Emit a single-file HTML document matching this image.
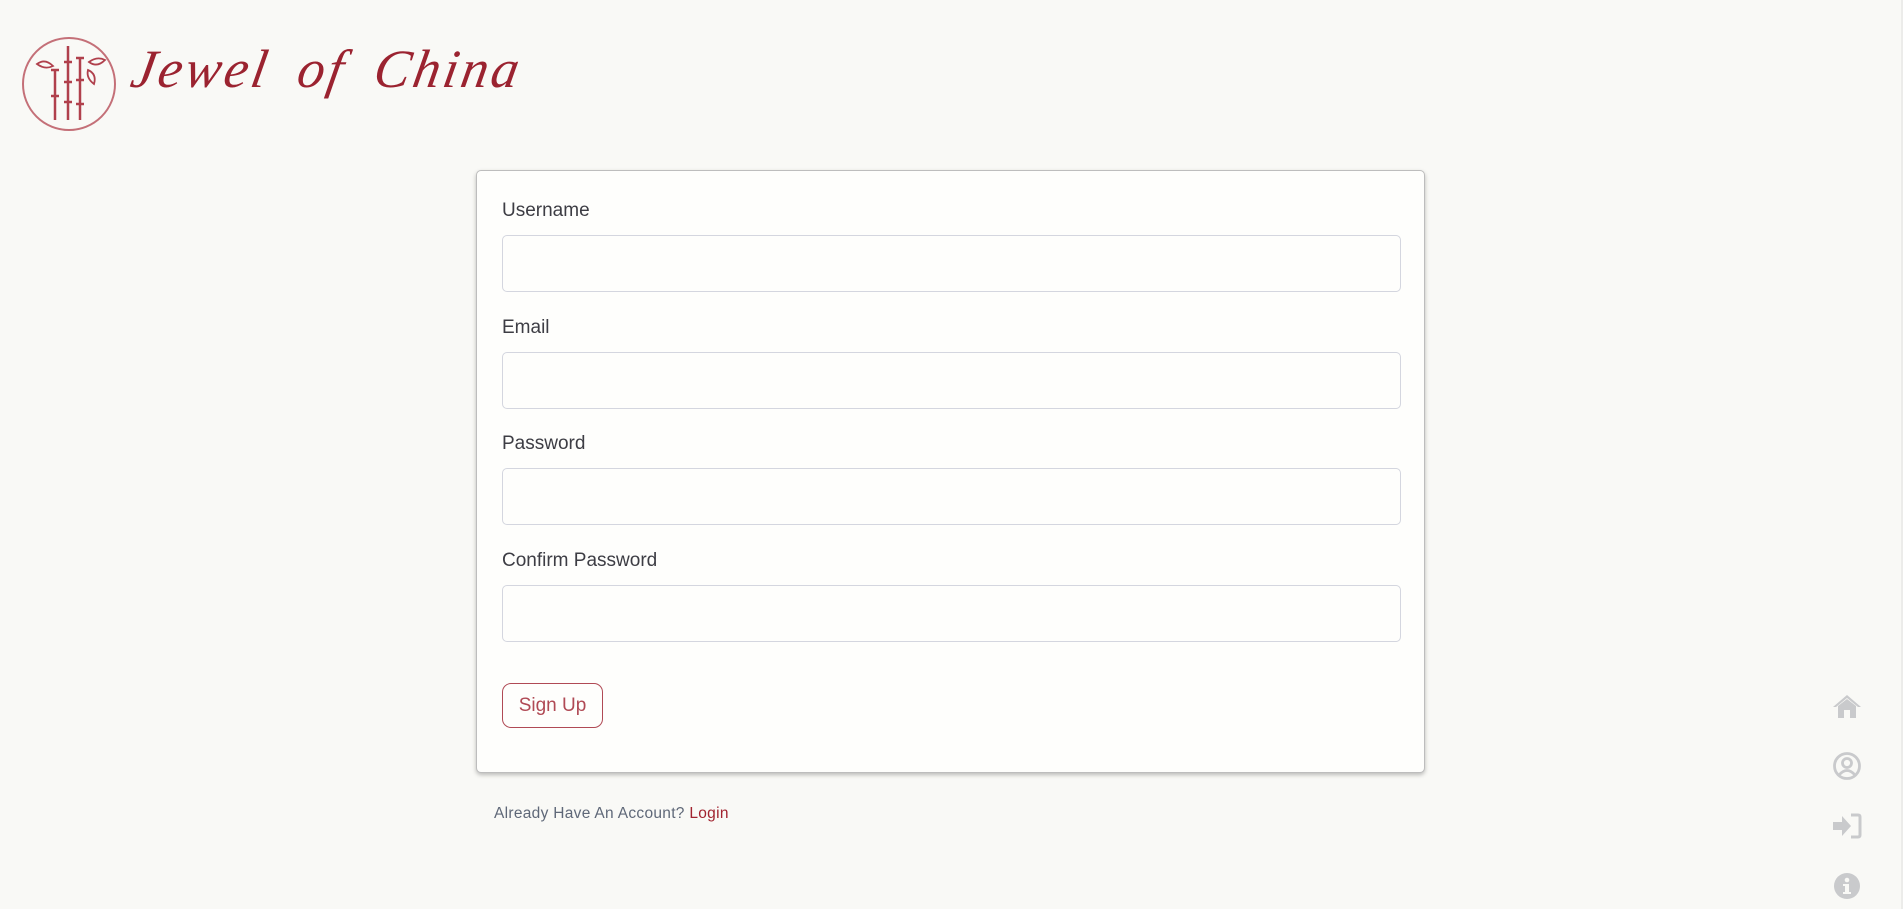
<!DOCTYPE html>
<html><head><meta charset="utf-8"><style>
*{box-sizing:border-box;margin:0;padding:0}
body{width:1903px;height:909px;background:#f9f9f6;font-family:"Liberation Sans",sans-serif;position:relative;overflow:hidden}
.card{position:absolute;left:476px;top:170px;width:949px;height:603px;background:#fefefc;border:1px solid #bdbdbd;border-radius:5px;box-shadow:0 2px 4px rgba(0,0,0,.25)}
.lbl{position:absolute;left:25px;font-size:19px;color:#3d3d44}
.inp{position:absolute;left:25px;width:899px;height:57px;border:1px solid #d4d6df;border-radius:5px;background:#fefefc}
.btn{position:absolute;left:25px;top:512px;width:101px;height:45px;border:1px solid #b04a55;border-radius:9px;color:#b04a55;font-size:19px;line-height:43px;text-align:center}
.foot{position:absolute;left:494px;top:805px;font-size:15.5px;color:#5f6878;letter-spacing:.3px}
.foot span{color:#a1232f}
.logo{position:absolute;left:132px;top:38px;font-family:"Liberation Serif",serif;font-style:italic;font-size:54px;color:#9b2330;letter-spacing:3px;word-spacing:12px;transform:skewX(-10deg)}
.ic{position:absolute;left:1832px}
</style></head><body>
<svg style="position:absolute;left:21px;top:36px" width="96" height="96" viewBox="0 0 96 96">
<circle cx="48" cy="48" r="46" fill="none" stroke="#c47078" stroke-width="2"/>
<g stroke="#b0404c" stroke-width="2.5" fill="none">
<line x1="34" y1="34" x2="34" y2="84"/><line x1="47" y1="10" x2="47" y2="84"/><line x1="59" y1="22" x2="59" y2="84"/>
<line x1="30" y1="34" x2="38" y2="34"/><line x1="30" y1="60" x2="38" y2="60"/><line x1="43" y1="26" x2="51" y2="26"/><line x1="43" y1="46" x2="51" y2="46"/><line x1="43" y1="66" x2="51" y2="66"/><line x1="55" y1="22" x2="63" y2="22"/><line x1="55" y1="44" x2="63" y2="44"/><line x1="55" y1="68" x2="63" y2="68"/>
<path d="M16 28 Q24 22 32 30 Q24 34 16 28Z" stroke-width="1.8"/>
<path d="M68 26 Q76 20 84 24 Q76 32 68 26Z" stroke-width="1.8"/>
<path d="M67 34 Q76 38 73 48 Q65 42 67 34Z" stroke-width="1.8"/>
</g></svg>
<div class="logo">Jewel of China</div>
<div class="card">
<div class="lbl" style="top:29px">Username</div><div class="inp" style="top:64px"></div>
<div class="lbl" style="top:146px">Email</div><div class="inp" style="top:181px"></div>
<div class="lbl" style="top:262px">Password</div><div class="inp" style="top:297px"></div>
<div class="lbl" style="top:379px">Confirm Password</div><div class="inp" style="top:414px"></div>
<div class="btn">Sign Up</div>
</div>
<div class="foot">Already Have An Account? <span>Login</span></div>
<svg class="ic" style="top:693px" width="30" height="26" viewBox="0 0 30 26"><path d="M15 2 L1 14 L4 14 L15 5 L26 14 L29 14Z M6 13 L15 6 L24 13 L24 25 L18 25 L18 17 L12 17 L12 25 L6 25Z" fill="#c9cacc"/></svg>
<svg class="ic" style="top:751px" width="30" height="30" viewBox="0 0 30 30"><g fill="none" stroke="#c9cacc" stroke-width="2.8"><circle cx="15" cy="15" r="12.5"/><circle cx="15" cy="12" r="4.5"/><path d="M7 24 Q15 15 23 24"/></g></svg>
<svg class="ic" style="top:812px" width="30" height="28" viewBox="0 0 30 28"><path d="M1 10 L10 10 L10 4 L19 14 L10 24 L10 18 L1 18Z" fill="#c9cacc"/><path d="M19 3 L26 3 Q28 3 28 5 L28 23 Q28 25 26 25 L19 25" fill="none" stroke="#c9cacc" stroke-width="3"/></svg>
<svg class="ic" style="top:871px" width="30" height="30" viewBox="0 0 30 30"><circle cx="15" cy="15" r="13" fill="#c9cacc"/><circle cx="15" cy="9" r="2.3" fill="#f9f9f6"/><path d="M11 13 L17 13 L17 21 L19 21 L19 23 L11 23 L11 21 L13 21 L13 15 L11 15Z" fill="#f9f9f6"/></svg>
<div style="position:absolute;left:1901px;top:0;width:2px;height:909px;background:#ececea"></div>
</body></html>
